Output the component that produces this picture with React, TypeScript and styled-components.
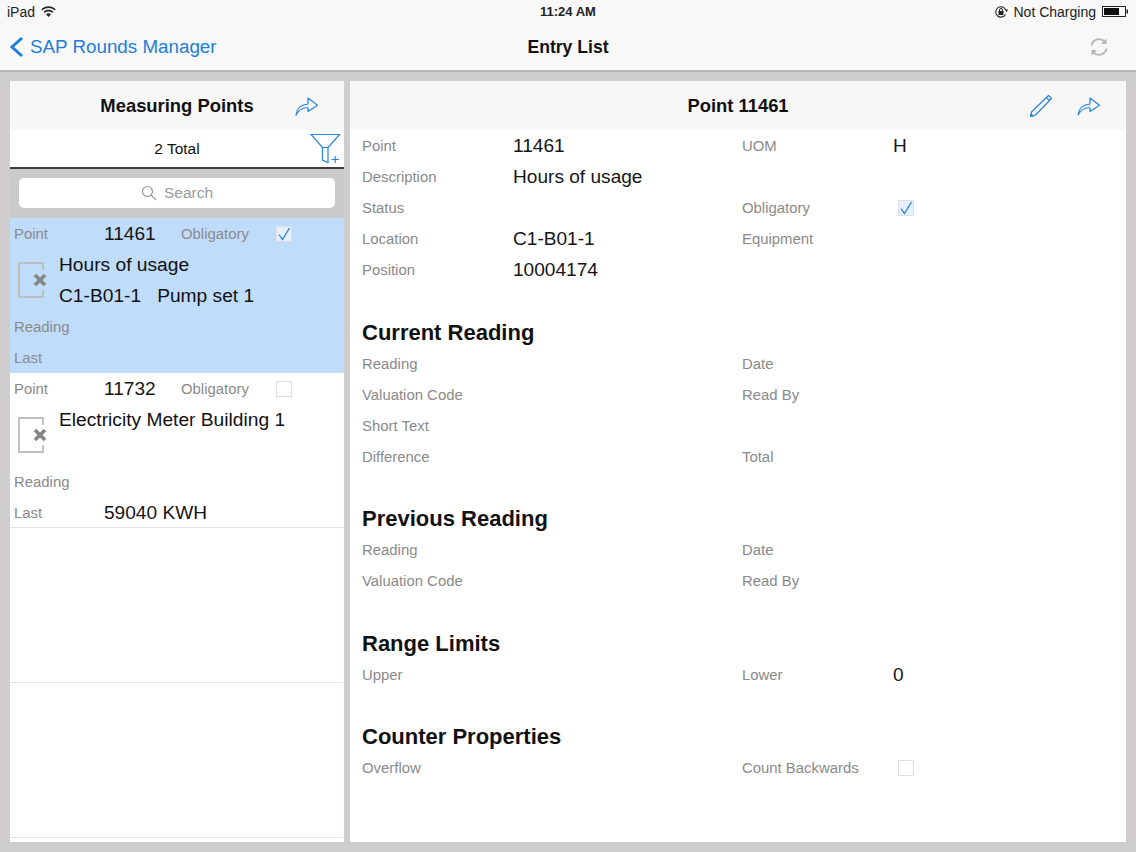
import React from "react";
import styled, { createGlobalStyle } from "styled-components";

const GlobalStyle = createGlobalStyle`
    html, body {
        margin: 0;
        padding: 0;
        background: #cfcdce;
    }
    body {
        font-family: "Liberation Sans", Arial, sans-serif;
        color: #111;
    }
`;

const Page = styled.div`
    width: 1136px;
    height: 852px;
    display: flex;
    flex-direction: column;
    overflow: hidden;
    background: #cfcdce;
`;

const TopBar = styled.header`
    height: 70px;
    flex: none;
    background: #f8f8f8;
    border-bottom: 2px solid #b9b8b8;
    display: flex;
    flex-direction: column;
`;

const StatusBar = styled.div`
    height: 23px;
    padding: 0 7px;
    display: grid;
    grid-template-columns: 1fr auto 1fr;
    align-items: center;
    font-size: 14px;
    color: #222;
`;

const StatusSide = styled.div<{ $right?: boolean }>`
    display: flex;
    align-items: center;
    gap: 6px;
    justify-content: ${(p) => (p.$right ? "flex-end" : "flex-start")};
`;

const Clock = styled.span`
    font-weight: 700;
    font-size: 13px;
`;

const NavBar = styled.div`
    flex: 1;
    display: grid;
    grid-template-columns: 1fr auto 1fr;
    align-items: center;
    padding: 1px 9px 0;
`;

const BackLink = styled.div`
    display: flex;
    align-items: center;
    gap: 6px;
    color: #1d7fd8;
    font-size: 18.8px;
`;

const NavTitle = styled.div`
    font-size: 17.6px;
    font-weight: 700;
`;

const NavRight = styled.div`
    display: flex;
    justify-content: flex-end;
    padding-right: 18px;
`;

const Content = styled.main`
    flex: 1;
    display: flex;
    gap: 6px;
    padding: 9px 10px 10px;
`;

const MasterPanel = styled.section`
    width: 334px;
    flex: none;
    background: #fff;
    display: flex;
    flex-direction: column;
`;

const DetailPanel = styled.section`
    flex: 1;
    background: #fff;
    display: flex;
    flex-direction: column;
`;

const PanelHeader = styled.div`
    height: 49px;
    flex: none;
    background: #f7f7f7;
    position: relative;
    display: flex;
    align-items: center;
    justify-content: center;
    font-size: 18.4px;
    font-weight: 700;
`;

const HeaderActions = styled.div<{ $gap: number; $right: number }>`
    position: absolute;
    top: 0;
    bottom: 0;
    right: ${(p) => p.$right}px;
    display: flex;
    align-items: center;
    gap: ${(p) => p.$gap}px;
`;

const TotalRow = styled.div`
    height: 36px;
    flex: none;
    position: relative;
    border-bottom: 2px solid #3d3d3d;
    display: flex;
    align-items: center;
    justify-content: center;
    font-size: 15.5px;
    padding-top: 1px;
    box-sizing: content-box;
`;

const FilterButton = styled.span`
    position: absolute;
    top: 3px;
    right: 3px;
    line-height: 0;
`;

const SearchBar = styled.div`
    height: 49px;
    flex: none;
    box-sizing: border-box;
    padding: 9px 9px 10px;
    background: #cbcacb;
`;

const SearchField = styled.div`
    height: 30px;
    background: #fff;
    border-radius: 5px;
    display: flex;
    align-items: center;
    justify-content: center;
    gap: 7px;
    color: #9a9a9a;
    font-size: 15.5px;
`;

const EntryList = styled.div`
    flex: 1;
    display: flex;
    flex-direction: column;
`;

const Entry = styled.div<{ $selected?: boolean }>`
    height: 155px;
    flex: none;
    box-sizing: border-box;
    background: ${(p) => (p.$selected ? "#bfdcfb" : "#fff")};
    border-bottom: ${(p) => (p.$selected ? "none" : "1px solid #e3e3e3")};
    padding: 0 4px;
    display: flex;
    flex-direction: column;
`;

const EntryLine = styled.div`
    height: 31px;
    flex: none;
    display: grid;
    grid-template-columns: 90px 77px 95px 1fr;
    align-items: center;
`;

const EntryBody = styled.div`
    height: 62px;
    flex: none;
    display: flex;
    align-items: center;
    padding-left: 4px;
    gap: 11px;
`;

const EntryText = styled.div`
    display: flex;
    flex-direction: column;
    align-self: stretch;
`;

const EntryTextLine = styled.div`
    height: 31px;
    display: flex;
    align-items: center;
    gap: 16px;
    font-size: 19.2px;
    white-space: nowrap;
`;

const Label = styled.span`
    color: #8a8a8a;
    font-size: 14.9px;
    white-space: nowrap;
`;

const Value = styled.span`
    color: #151515;
    font-size: 19.1px;
    white-space: nowrap;
`;

const Box = styled.span<{ $checked?: boolean; $inset?: number }>`
    width: 16px;
    height: 16px;
    margin-left: ${(p) => p.$inset ?? 0}px;
    box-sizing: border-box;
    border: 1px solid #dcdfe4;
    background: ${(p) => (p.$checked ? "#e6f0fb" : "rgba(255,255,255,0.55)")};
    position: relative;
    display: inline-block;
`;

const Tick = styled.svg`
    position: absolute;
    left: 0;
    top: 0;
`;

const DetailBody = styled.div`
    flex: 1;
    display: flex;
    flex-direction: column;
    padding-left: 12px;
`;

const FieldRow = styled.div`
    height: 31px;
    flex: none;
    display: grid;
    grid-template-columns: 151px 229px 151px 1fr;
    align-items: center;
`;

const SectionTitle = styled.h2<{ $top: number; $h?: number }>`
    margin: ${(p) => p.$top}px 0 0;
    height: ${(p) => p.$h ?? 31}px;
    flex: none;
    display: flex;
    align-items: center;
    font-size: 22px;
    font-weight: 700;
    color: #111;
`;

const BLUE = "#2a86d8";

const ShareIcon = () => (
    <svg width="24" height="20" viewBox="0 0 24 20" fill="none" stroke={BLUE} strokeWidth="1.2" strokeLinejoin="round">
        <path d="M1 19C2 12 6.500 8.500 13 8V2L22.500 9.300 13 15.500V11.800C8 11.300 4 13.500 1 19Z" />
    </svg>
);

const PencilIcon = () => (
    <svg width="24" height="24" viewBox="0 0 24 24" fill="none" stroke={BLUE} strokeWidth="1.2" strokeLinejoin="round">
        <path d="M19.500 1.500L22.500 4.500 6 21.500 1.500 22.500 2.500 18Z" />
        <path d="M17.500 3.500L20.500 6.500" />
        <path d="M1.500 22.500L2 20 4 22Z" fill={BLUE} />
    </svg>
);

const BrokenImage = () => (
    <svg width="30" height="36" viewBox="0 0 30 36" fill="none">
        <path d="M25 8V1H1V35H25V28" stroke="#bdbdbd" strokeWidth="1.800" />
        <path d="M17 13L27 23M27 13L17 23" stroke="#858585" strokeWidth="3.600" />
    </svg>
);

const Check = ({ checked, inset }: { checked?: boolean; inset?: number }) => (
    <Box $checked={checked} $inset={inset}>
        {checked && (
            <Tick width="14" height="14" viewBox="0 0 14 14" fill="none" stroke="#2a7fd6" strokeWidth="1.300">
                <path d="M2 7.500L5.500 12.500 12.500 1" />
            </Tick>
        )}
    </Box>
);

const Field = ({ label, value }: { label: string; value?: React.ReactNode }) => (
    <>
        <Label>{label}</Label>
        {typeof value === "string" ? <Value>{value}</Value> : value ?? <span />}
    </>
);

const App = () => {
    return (
        <Page>
            <GlobalStyle />
            <TopBar>
                <StatusBar>
                    <StatusSide>
                        iPad
                        <svg width="15" height="11" viewBox="0 0 15 11" fill="#222">
                            <path d="M7.500 11L5 8.200C6.400 6.900 8.600 6.900 10 8.200Z" />
                            <path d="M3.800 6.900L2.700 5.700C5.400 3.200 9.600 3.200 12.300 5.700L11.200 6.900C9.100 5 5.900 5 3.800 6.900Z" />
                            <path d="M1.500 4.500L.3 3.200C4.400-.7 10.600-.7 14.700 3.200L13.500 4.500C10.100 1.300 4.900 1.300 1.500 4.500Z" />
                        </svg>
                    </StatusSide>
                    <Clock>11:24 AM</Clock>
                    <StatusSide $right>
                        <svg width="14" height="14" viewBox="0 0 14 14" fill="none" stroke="#222">
                            <path d="M11.500 9.500A5.200 5.200 0 1 1 11.800 5" strokeWidth="1.100" />
                            <path d="M12.800 6.800L11.500 5.500 13.500 4.500Z" fill="#222" strokeWidth=".5" />
                            <rect x="4.500" y="6" width="5" height="4" fill="#222" stroke="none" />
                            <path d="M5.500 6V5A1.500 1.500 0 0 1 8.500 5V6" strokeWidth="1" />
                        </svg>
                        <span>Not Charging</span>
                        <svg width="27" height="11" viewBox="0 0 27 11">
                            <rect x=".5" y=".5" width="23" height="10" fill="#f8f8f8" stroke="#222" />
                            <rect x="2" y="2" width="15" height="7" fill="#111" />
                            <rect x="24.500" y="3.500" width="1.500" height="4" fill="#222" />
                        </svg>
                    </StatusSide>
                </StatusBar>
                <NavBar>
                    <BackLink>
                        <svg width="15" height="22" viewBox="0 0 15 22" fill="none" stroke="#1d7fd8" strokeWidth="3">
                            <path d="M13 2L3 11 13 20" />
                        </svg>
                        SAP Rounds Manager
                    </BackLink>
                    <NavTitle>Entry List</NavTitle>
                    <NavRight>
                        <svg width="20" height="20" viewBox="0 0 20 20" fill="none" stroke="#b5b5b5" strokeWidth="1.800">
                            <path d="M2.500 8.500A7.700 7.700 0 0 1 16 5" />
                            <path d="M17.500 11.500A7.700 7.700 0 0 1 4 15" />
                            <path d="M17.500 1.500V7H12Z" fill="#b5b5b5" stroke="none" />
                            <path d="M2.500 18.500V13H8Z" fill="#b5b5b5" stroke="none" />
                        </svg>
                    </NavRight>
                </NavBar>
            </TopBar>
            <Content>
                <MasterPanel>
                    <PanelHeader>
                        Measuring Points
                        <HeaderActions $gap={0} $right={25}>
                            <ShareIcon />
                        </HeaderActions>
                    </PanelHeader>
                    <TotalRow>
                        2 Total
                        <FilterButton>
                            <svg width="31" height="31" viewBox="0 0 31 31" fill="none" stroke={BLUE} strokeWidth="1.200">
                                <path d="M1 1.500H29.500L18 14.500V29.500L12.500 27V14.500Z" />
                                <path d="M12.500 14.500H18" />
                                <path d="M21.500 26.500H29M25.200 23V30" />
                            </svg>
                        </FilterButton>
                    </TotalRow>
                    <SearchBar>
                        <SearchField>
                            <svg width="16" height="16" viewBox="0 0 16 16" fill="none" stroke="#9a9a9a" strokeWidth="1.200">
                                <circle cx="6.500" cy="6.500" r="5" />
                                <path d="M10.200 10.200L15 15" />
                            </svg>
                            Search
                        </SearchField>
                    </SearchBar>
                    <EntryList>
                        <Entry $selected>
                            <EntryLine>
                                <Label>Point</Label>
                                <Value>11461</Value>
                                <Label>Obligatory</Label>
                                <Check checked />
                            </EntryLine>
                            <EntryBody>
                                <BrokenImage />
                                <EntryText>
                                    <EntryTextLine>Hours of usage</EntryTextLine>
                                    <EntryTextLine>
                                        <span>C1-B01-1</span>
                                        <span>Pump set 1</span>
                                    </EntryTextLine>
                                </EntryText>
                            </EntryBody>
                            <EntryLine>
                                <Label>Reading</Label>
                            </EntryLine>
                            <EntryLine>
                                <Label>Last</Label>
                            </EntryLine>
                        </Entry>
                        <Entry>
                            <EntryLine>
                                <Label>Point</Label>
                                <Value>11732</Value>
                                <Label>Obligatory</Label>
                                <Check />
                            </EntryLine>
                            <EntryBody>
                                <BrokenImage />
                                <EntryText>
                                    <EntryTextLine>Electricity Meter Building 1</EntryTextLine>
                                </EntryText>
                            </EntryBody>
                            <EntryLine>
                                <Label>Reading</Label>
                            </EntryLine>
                            <EntryLine>
                                <Label>Last</Label>
                                <Value>59040 KWH</Value>
                            </EntryLine>
                        </Entry>
                        <Entry />
                        <Entry />
                    </EntryList>
                </MasterPanel>
                <DetailPanel>
                    <PanelHeader>
                        Point 11461
                        <HeaderActions $gap={24} $right={25}>
                            <PencilIcon />
                            <ShareIcon />
                        </HeaderActions>
                    </PanelHeader>
                    <DetailBody>
                        <FieldRow>
                            <Field label="Point" value="11461" />
                            <Field label="UOM" value="H" />
                        </FieldRow>
                        <FieldRow>
                            <Field label="Description" value="Hours of usage" />
                        </FieldRow>
                        <FieldRow>
                            <Field label="Status" />
                            <Field label="Obligatory" value={<Check checked inset={5} />} />
                        </FieldRow>
                        <FieldRow>
                            <Field label="Location" value="C1-B01-1" />
                            <Field label="Equipment" />
                        </FieldRow>
                        <FieldRow>
                            <Field label="Position" value="10004174" />
                        </FieldRow>

                        <SectionTitle $top={32}>Current Reading</SectionTitle>
                        <FieldRow>
                            <Field label="Reading" />
                            <Field label="Date" />
                        </FieldRow>
                        <FieldRow>
                            <Field label="Valuation Code" />
                            <Field label="Read By" />
                        </FieldRow>
                        <FieldRow>
                            <Field label="Short Text" />
                        </FieldRow>
                        <FieldRow>
                            <Field label="Difference" />
                            <Field label="Total" />
                        </FieldRow>

                        <SectionTitle $top={31}>Previous Reading</SectionTitle>
                        <FieldRow>
                            <Field label="Reading" />
                            <Field label="Date" />
                        </FieldRow>
                        <FieldRow>
                            <Field label="Valuation Code" />
                            <Field label="Read By" />
                        </FieldRow>

                        <SectionTitle $top={33} $h={30}>Range Limits</SectionTitle>
                        <FieldRow>
                            <Field label="Upper" />
                            <Field label="Lower" value="0" />
                        </FieldRow>

                        <SectionTitle $top={32} $h={30}>Counter Properties</SectionTitle>
                        <FieldRow>
                            <Field label="Overflow" />
                            <Field label="Count Backwards" value={<Check inset={5} />} />
                        </FieldRow>
                    </DetailBody>
                </DetailPanel>
            </Content>
        </Page>
    );
};

export default App;
